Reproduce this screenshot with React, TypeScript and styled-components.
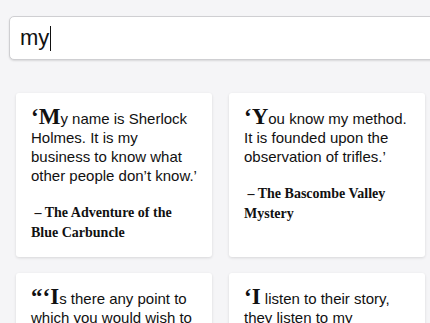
import styled, { createGlobalStyle } from "styled-components";

const GlobalStyle = createGlobalStyle`
  html, body {
    margin: 0;
    padding: 0;
    background: #f5f5f7;
    overflow: hidden;
  }
`;

const Page = styled.div`
  padding-top: 16px;
  width: 430px;
  height: 323px;
  overflow: hidden;
`;

const SearchBar = styled.div`
  display: flex;
  align-items: center;
  margin-left: 9px;
  width: 440px;
  height: 44px;
  box-sizing: border-box;
  padding-left: 10px;
  background: #fff;
  border: 1px solid #cfcfd2;
  border-radius: 5px;
  box-shadow: 0 1px 2px rgba(0, 0, 0, 0.12);
  font-family: "Liberation Sans", Arial, sans-serif;
  font-size: 22px;
  color: #111;
`;

const Caret = styled.span`
  display: inline-block;
  width: 1px;
  height: 25px;
  background: #111;
  margin-left: 1px;
`;

const Grid = styled.div`
  display: grid;
  grid-template-columns: 196px 196px;
  column-gap: 17px;
  row-gap: 16px;
  margin-top: 33px;
  padding-left: 16px;
`;

const Card = styled.div`
  background: #fff;
  border-radius: 3px;
  box-shadow: 0 1px 3px rgba(0, 0, 0, 0.12);
  padding: 14px 14px 14px 15px;
`;

const Quote = styled.p`
  margin: 0;
  font-family: "Liberation Sans", Arial, sans-serif;
  font-size: 15px;
  line-height: 19px;
  color: #111;
`;

const Initial = styled.span`
  font-family: "Liberation Serif", "Times New Roman", serif;
  font-weight: bold;
  font-size: 23px;
  line-height: 19px;
`;

const Source = styled.p`
  margin: 18px 0 0;
  font-family: "Liberation Serif", "Times New Roman", serif;
  font-weight: bold;
  font-size: 14px;
  line-height: 20px;
  color: #111;
`;

const quotes = [
  {
    open: "‘M",
    rest: "y name is Sherlock Holmes. It is my business to know what other people don’t know.’",
    source: "The Adventure of the Blue Carbuncle",
  },
  {
    open: "‘Y",
    rest: "ou know my method. It is founded upon the observation of trifles.’",
    source: "The Bascombe Valley Mystery",
  },
  {
    open: "“‘I",
    rest: "s there any point to which you would wish to draw my attention?’ ‘To the curious incident of the dog in the night-time.’”",
    source: "Silver Blaze",
  },
  {
    open: "‘I",
    rest: " listen to their story, they listen to my comments, and then I pocket my fee.’",
    source: "A Study in Scarlet",
  },
];

export default function App() {
  return (
    <Page>
      <GlobalStyle />
      <SearchBar>
        my
        <Caret />
      </SearchBar>
      <Grid>
        {quotes.map((q) => (
          <Card key={q.source}>
            <Quote>
              <Initial>{q.open}</Initial>
              {q.rest}
            </Quote>
            <Source>{"\u00a0– " + q.source}</Source>
          </Card>
        ))}
      </Grid>
    </Page>
  );
}
